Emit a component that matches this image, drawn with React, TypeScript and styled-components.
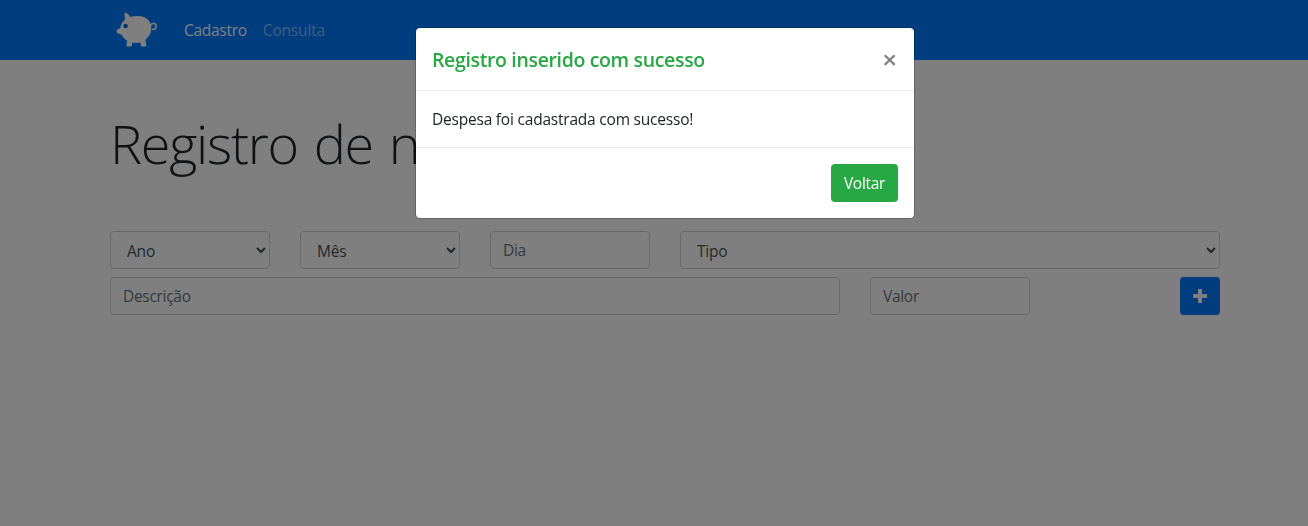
import React from 'react';
import styled, { createGlobalStyle } from 'styled-components';

const GlobalStyle = createGlobalStyle`
  *, *::before, *::after { box-sizing: border-box; }
  html, body { margin: 0; height: 100%; overflow: hidden; }
  body {
    background: #fff;
    color: #212529;
    font: 400 16px/24px "Open Sans", "Noto Sans", sans-serif;
  }
  h1, h5, p { margin: 0; }
  button, input, select { font: inherit; margin: 0; }
`;

const Page = styled.div`
  width: 1330px;
  height: 526px;
`;

const Container = styled.div`
  width: 1140px;
  margin: 0 auto;
  padding: 0 15px;
`;

const Navbar = styled.nav`
  height: 60px;
  background: #007bff;
`;

const NavContent = styled(Container)`
  display: flex;
  align-items: center;
  height: 60px;
`;

const Brand = styled.a`
  display: flex;
  width: 50px;
  margin-right: 16px;
`;

const NavLink = styled.a<{ $active?: boolean }>`
  padding: 8px;
  color: ${({ $active }) => ($active ? '#fff' : 'rgba(255, 255, 255, 0.5)')};
  font-size: 15.5px;
  letter-spacing: ${({ $active }) => ($active ? '-0.28px' : '-0.18px')};
  white-space: nowrap;
`;

const Heading = styled.h1`
  margin-top: 48px;
  height: 123px;
  padding-top: 2px;
  font-size: 54px;
  font-weight: 300;
  line-height: 67px;
  letter-spacing: -1.25px;
  word-spacing: 3px;
  white-space: nowrap;
`;

const Row = styled.div`
  display: flex;
  gap: 30px;
  margin-bottom: 8px;
`;

const Input = styled.input<{ $width: number }>`
  width: ${({ $width }) => $width}px;
  height: 38px;
  padding: 6px 12px;
  border: 1px solid #ced4da;
  border-radius: 4px;
  background: #fff;
  color: #495057;
  font-size: 15.5px;
  letter-spacing: -0.3px;
  &::placeholder { color: #6c757d; opacity: 1; }
`;

const Select = styled.select<{ $width: number }>`
  width: ${({ $width }) => $width}px;
  height: 38px;
  padding: 7px 12px 5px;
  border: 1px solid #ced4da;
  border-radius: 4px;
  background: #fff;
  color: #495057;
  font-size: 15.5px;
  letter-spacing: -0.2px;
`;

const Button = styled.button<{ $color: string; $width: number }>`
  display: flex;
  align-items: center;
  justify-content: center;
  width: ${({ $width }) => $width}px;
  height: 38px;
  padding: 0;
  border: 0;
  border-radius: 4px;
  background: ${({ $color }) => $color};
  color: #fff;
  font-size: 15.5px;
  letter-spacing: -0.3px;
`;

const AddButton = styled(Button)`
  margin-left: auto;
`;

const Backdrop = styled.div`
  position: fixed;
  inset: 0;
  background: rgba(0, 0, 0, 0.5);
`;

const ModalLayer = styled.div`
  position: fixed;
  top: 0;
  left: 0;
  display: flex;
  justify-content: center;
  width: 1330px;
  padding-top: 27px;
`;

const Dialog = styled.div`
  width: 500px;
  border: 1px solid rgba(0, 0, 0, 0.2);
  border-radius: 5px;
  background: #fff;
  background-clip: padding-box;
`;

const DialogHeader = styled.div`
  display: flex;
  justify-content: space-between;
  height: 63px;
  padding: 16px;
  border-bottom: 1px solid #e9ecef;
`;

const DialogTitle = styled.h5`
  color: #28a745;
  font-size: 19.5px;
  font-weight: 600;
  line-height: 31px;
  letter-spacing: -0.35px;
  white-space: nowrap;
`;

const Close = styled.button`
  padding: 0 1px 0 0;
  border: 0;
  background: none;
  color: #000;
  opacity: 0.5;
  font-size: 26px;
  font-weight: 600;
  line-height: 30px;
  height: 30px;
`;

const DialogBody = styled.div`
  height: 57px;
  padding: 16px;
  font-size: 15.5px;
  letter-spacing: -0.21px;
  border-bottom: 1px solid #e9ecef;
`;

const DialogFooter = styled.div`
  display: flex;
  justify-content: flex-end;
  height: 70px;
  padding: 16px;
`;

const PiggyBank = () => (
  <svg width="50" height="40" viewBox="0 0 50 40" aria-hidden="true">
    <path
      fill="#fff"
      d="M15 2.600C17.200 3.200 19 4.800 20.200 6.900C22.500 6.200 25.500 6 28.500 6C36 6 41.300 11 41.300 18C41.300 23 38.800 27 35.300 29.800L36.300 35.500Q36.400 36.500 35.500 36.500H32Q31 36.500 30.800 35.500L30.300 32.600C27.500 33.100 25 33 22.300 32.600L21.800 35.500Q21.600 36.500 20.700 36.500H17.400Q16.300 36.500 16.400 35.500L17 30.500C14.600 29 12.800 27 11.500 24.400L8 23.500Q6.500 23 6.500 21.500Q6.500 19.800 8 19.200L10.200 18.200C10.700 14.700 12.500 11.500 15.200 9.500C14.600 7.200 14.200 4.500 15 2.600Z"
    />
    <path fill="none" stroke="#fff" strokeWidth="1.600" d="M40.300 16.300C40.800 12.600 46.200 12.300 46.200 16.500C46.200 19 43.400 20.200 42.300 18.700" />
    <circle cx="15.600" cy="16" r="2.200" fill="#0067d6" />
  </svg>
);

const PlusIcon = () => (
  <svg width="14" height="14" viewBox="0 0 14 14" aria-hidden="true">
    <path fill="#fff" d="M5.500 0h3q.5 0 .5.500V5h4.500q.5 0 .5.500v3q0 .5-.5.500H9v4.500q0 .5-.5.500h-3q-.5 0-.5-.5V9H.5Q0 9 0 8.500v-3Q0 5 .5 5H5V.5Q5 0 5.500 0z" />
  </svg>
);

export default function App() {
  return (
    <>
      <GlobalStyle />
      <Page>
        <Navbar>
          <NavContent>
            <Brand href="#"><PiggyBank /></Brand>
            <NavLink $active>Cadastro</NavLink>
            <NavLink>Consulta</NavLink>
          </NavContent>
        </Navbar>
        <Container>
          <Heading>Registro de nova despesa</Heading>
          <Row>
            <Select $width={160}><option>Ano</option></Select>
            <Select $width={160}><option>Mês</option></Select>
            <Input $width={160} placeholder="Dia" />
            <Select $width={540}><option>Tipo</option></Select>
          </Row>
          <Row>
            <Input $width={730} placeholder="Descrição" />
            <Input $width={160} placeholder="Valor" />
            <AddButton $color="#007bff" $width={40} aria-label="Adicionar"><PlusIcon /></AddButton>
          </Row>
        </Container>
      </Page>
      <Backdrop />
      <ModalLayer>
        <Dialog role="dialog">
          <DialogHeader>
            <DialogTitle>Registro inserido com sucesso</DialogTitle>
            <Close>×</Close>
          </DialogHeader>
          <DialogBody>Despesa foi cadastrada com sucesso!</DialogBody>
          <DialogFooter>
            <Button $color="#28a745" $width={67}>Voltar</Button>
          </DialogFooter>
        </Dialog>
      </ModalLayer>
    </>
  );
}
